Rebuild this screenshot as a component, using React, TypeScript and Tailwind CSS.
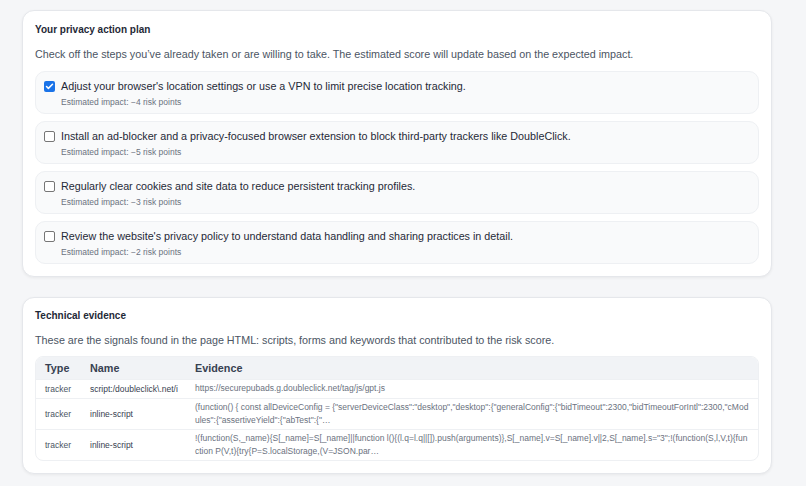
import { Check } from "lucide-react";
import { useState } from "react";

interface Step {
  id: number;
  text: string;
  impact: number;
}

const steps: Step[] = [
  {
    id: 1,
    text: "Adjust your browser's location settings or use a VPN to limit precise location tracking.",
    impact: 4,
  },
  {
    id: 2,
    text: "Install an ad-blocker and a privacy-focused browser extension to block third-party trackers like DoubleClick.",
    impact: 5,
  },
  {
    id: 3,
    text: "Regularly clear cookies and site data to reduce persistent tracking profiles.",
    impact: 3,
  },
  {
    id: 4,
    text: "Review the website's privacy policy to understand data handling and sharing practices in detail.",
    impact: 2,
  },
];

const evidence = [
  {
    type: "tracker",
    name: "script:/doubleclick\\.net/i",
    value: "https://securepubads.g.doubleclick.net/tag/js/gpt.js",
  },
  {
    type: "tracker",
    name: "inline-script",
    value:
      '(function() { const allDeviceConfig = {"serverDeviceClass":"desktop","desktop":{"generalConfig":{"bidTimeout":2300,"bidTimeoutForIntl":2300,"cModules":{"assertiveYield":{"abTest":{"…',
  },
  {
    type: "tracker",
    name: "inline-script",
    value:
      '!(function(S,_name){S[_name]=S[_name]||function l(){(l.q=l.q||[]).push(arguments)},S[_name].v=S[_name].v||2,S[_name].s="3";!(function(S,l,V,t){function P(V,t){try{P=S.localStorage,(V=JSON.par…',
  },
];

export default function App() {
  const [checked, setChecked] = useState<number[]>([1]);

  const toggle = (id: number) => {
    setChecked((prev) => (prev.includes(id) ? prev.filter((x) => x !== id) : [...prev, id]));
  };

  return (
    <div className="min-h-[486px] bg-[#f5f6f8] px-[22px] pt-[10px] pb-3 font-['Liberation_Sans',Arial,sans-serif] text-[#1f2937]">
      <div className="w-[750px] space-y-[20px]">
        {/* Action plan */}
        <section className="rounded-[12px] border border-[#e5e7eb] bg-white px-[12px] pt-[12px] pb-[12px] shadow-[0_1px_3px_rgba(0,0,0,0.06)]">
          <h2 className="text-[10px] font-bold leading-[14px] text-[#1f2937]">Your privacy action plan</h2>
          <p className="mt-[10px] text-[10.75px] leading-[14px] text-[#4b5563]">
            Check off the steps you&rsquo;ve already taken or are willing to take. The estimated score will update
            based on the expected impact.
          </p>
          <div className="mt-[10px] flex flex-col gap-[7px]">
            {steps.map((step) => {
              const on = checked.includes(step.id);
              return (
                <label
                  key={step.id}
                  className="flex h-[43px] cursor-pointer items-start gap-[6px] rounded-[10px] border border-[#eef0f3] bg-[#f9fafb] pl-[8px] pt-[7px]"
                >
                  <button
                    type="button"
                    onClick={() => toggle(step.id)}
                    className={
                      on
                        ? "mt-[2px] flex h-[11px] w-[11px] shrink-0 items-center justify-center rounded-[2px] bg-[#1a73e8]"
                        : "mt-[2px] h-[11px] w-[11px] shrink-0 rounded-[2px] border border-[#767676] bg-white"
                    }
                  >
                    {on && <Check className="h-[9px] w-[9px] text-white" strokeWidth={4} />}
                  </button>
                  <div>
                    <div className="text-[10.75px] leading-[14px] text-[#1f2937]">{step.text}</div>
                    <div className="mt-[3px] text-[8.5px] leading-[12px] text-[#6b7280]">
                      Estimated impact: &minus;{step.impact} risk points
                    </div>
                  </div>
                </label>
              );
            })}
          </div>
        </section>

        {/* Technical evidence */}
        <section className="rounded-[12px] border border-[#e5e7eb] bg-white px-[12px] pt-[11px] pb-[12px] shadow-[0_1px_3px_rgba(0,0,0,0.06)]">
          <h2 className="text-[10px] font-bold leading-[14px] text-[#1f2937]">Technical evidence</h2>
          <p className="mt-[10px] text-[10.75px] leading-[14px] text-[#4b5563]">
            These are the signals found in the page HTML: scripts, forms and keywords that contributed to the risk
            score.
          </p>
          <div className="mt-[9px] overflow-hidden rounded-[8px] border border-[#eef0f3]">
            <table className="w-full table-fixed border-collapse text-left">
              <colgroup>
                <col className="w-[54px]" />
                <col className="w-[105px]" />
                <col />
              </colgroup>
              <thead>
                <tr className="h-[22px] bg-[#f1f3f6] text-[10.8px] text-[#374151]">
                  <th className="pl-[9px] font-bold">Type</th>
                  <th className="font-bold">Name</th>
                  <th className="font-bold">Evidence</th>
                </tr>
              </thead>
              <tbody>
                {evidence.map((row, i) => (
                  <tr key={i} className="border-t border-[#eef0f3] align-middle">
                    <td className="py-[3px] pl-[9px] text-[8.5px] leading-[12px] text-[#4b5563]">{row.type}</td>
                    <td className="py-[3px] text-[8.5px] leading-[12px] text-[#374151]">{row.name}</td>
                    <td className="break-all py-[2px] pr-[8px] text-[8.5px] leading-[13px] text-[#6b7280]">
                      {row.value}
                    </td>
                  </tr>
                ))}
              </tbody>
            </table>
          </div>
        </section>
      </div>
    </div>
  );
}
